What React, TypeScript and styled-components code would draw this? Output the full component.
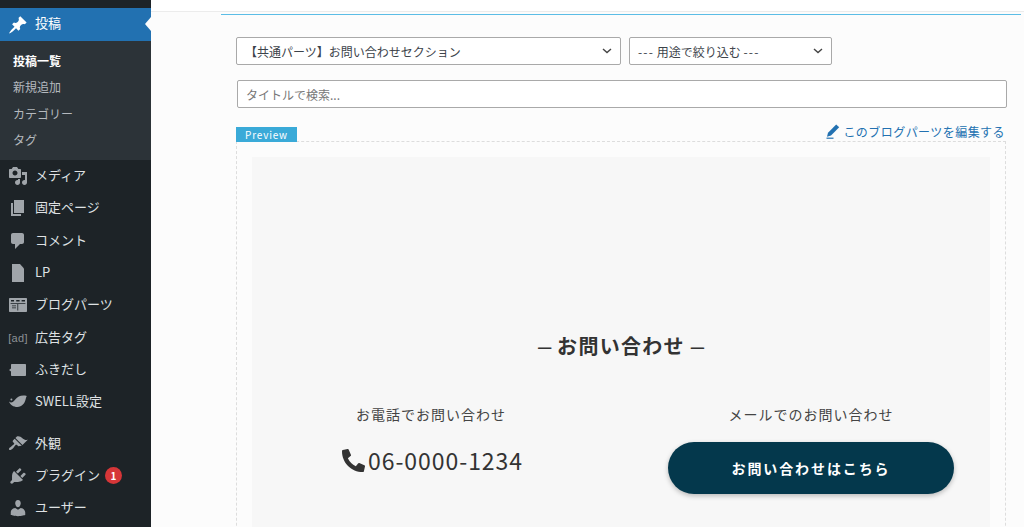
import React from 'react';
import styled, {createGlobalStyle} from "styled-components";
import {FaPhoneAlt} from "react-icons/fa";

const GlobalStyle = createGlobalStyle`
  html, body {
    margin: 0;
    padding: 0;
    height: 527px;
    overflow: hidden;
    background: #fcfcfc;
    font-family: "Noto Sans CJK JP", "Noto Sans", sans-serif;
  }
  * {
    box-sizing: border-box;
  }
`

const icons: Record<string, string> = {
    pin: "M10.44 3.02l1.82-1.82 6.36 6.35-1.83 1.82c-1.05-.68-2.48-.57-3.41.36l-.75.75c-.92.93-1.04 2.35-.35 3.41l-1.83 1.82-2.41-2.41-2.8 2.79c-.42.42-3.38 2.71-3.8 2.29s1.86-3.39 2.28-3.81l2.79-2.79L4.1 9.36l1.83-1.82c1.05.69 2.48.57 3.4-.36l.75-.75c.93-.92 1.05-2.35.36-3.41z",
    media: "M13 11V4c0-.55-.45-1-1-1h-1.67L9 1H5L3.67 3H2c-.55 0-1 .45-1 1v7c0 .55.45 1 1 1h10c.55 0 1-.45 1-1zM7 4.5c1.38 0 2.5 1.12 2.5 2.5S8.38 9.5 7 9.5 4.5 8.38 4.5 7 5.62 4.5 7 4.5zM14 6h5v10.5c0 1.38-1.12 2.5-2.5 2.5S14 17.88 14 16.5s1.12-2.5 2.5-2.5c.17 0 .34.02.5.05V9h-3V6zm-4 8.05V13h2v3.5c0 1.38-1.12 2.5-2.5 2.5S7 17.88 7 16.5 8.12 14 9.5 14c.17 0 .34.02.5.05z",
    pages: "M6 15V2h10v13H6zm-1 1h8v2H3V5h2v11z",
    comment: "M5 2h9c1.1 0 2 .9 2 2v7c0 1.1-.9 2-2 2h-2l-5 5v-5H5c-1.1 0-2-.9-2-2V4c0-1.1.9-2 2-2z",
    page: "M4 1h8l4 4.5V19H4z",
    parts: "M2 3h16c.6 0 1 .4 1 1v12c0 .6-.4 1-1 1H2c-.6 0-1-.4-1-1V4c0-.6.4-1 1-1zM3 5v1.6h3V5zM8.2 5v1.6h3.4V5zM13.6 5v1.6H17V5zM2.6 8.2v.8H17.4v-.8zM9.4 9v6.4h.8V9zM4 10.4v.9h4v-.9zM4 12.4v.9h4v-.9z",
    balloon: "M4 4h13c.6 0 1 .4 1 1v10c0 .6-.4 1-1 1H4c-.6 0-1-.4-1-1v-3.5L1 10l2-1.5V5c0-.6.4-1 1-1z",
    swell: "M1 9.5c1 1.2 2.6 1.4 3.8.6 2-1.4 3.2-4.2 6-5.6 2-1 5-1.4 8-.5-.6 1-.8 2-1.2 3.6-.8 3.6-3.6 7.4-8.2 7.4-4 0-7.2-2.2-8.4-5.5zM3.4 6.4a1 1 0 1 1 0 2 1 1 0 0 1 0-2z",
    brush: "M14.48 11.06L7.41 3.99l1.5-1.5c.5-.56 2.3-.47 3.51.32 1.21.8 1.43 1.28 2.91 2.1 1.18.64 2.45 1.26 4.45.85zm-.71.71L6.7 4.7 4.93 6.47c-.39.39-.39 1.02 0 1.41l1.06 1.06c.39.39.39 1.03 0 1.42-.6.6-1.43 1.11-2.21 1.69-.35.26-.7.53-1.01.84C1.43 13.23.4 14.96 1.2 15.76c.8.8 2.53-.23 3.86-1.56.31-.31.58-.66.84-1.01.58-.78 1.09-1.61 1.69-2.21.39-.39 1.03-.39 1.42 0l1.06 1.06c.39.39 1.02.39 1.41 0z",
    plug: "M13.11 4.36L9.87 7.6 8 5.73l3.24-3.24c.35-.34 1.05-.2 1.56.32.52.51.66 1.21.31 1.55zm-8 1.77l.91-1.12 9.01 9.01-1.19.84c-.71.71-2.63 1.16-3.82 1.16H6.14L4.9 17.26c-.59.59-1.54.59-2.12 0-.59-.58-.59-1.53 0-2.12l1.24-1.24v-3.88c0-1.13.4-3.19 1.09-3.89zm7.26 3.97l3.24-3.24c.34-.35 1.04-.21 1.55.31.52.51.66 1.21.31 1.55l-3.24 3.25z",
    user: "M10 9.25c-2.27 0-2.73-3.44-2.73-3.44C7 4.02 7.82 2 9.97 2c2.16 0 2.98 2.02 2.71 3.81 0 0-.41 3.44-2.68 3.44zm0 2.57L12.72 10c2.39 0 4.52 2.33 4.52 4.53v2.49s-3.65 1.13-7.24 1.13c-3.65 0-7.24-1.13-7.24-1.13v-2.49c0-2.25 1.94-4.48 4.47-4.48z",
};

const MenuIcon = ({name}: { name: string }) => (
    <IconBox>
        <svg width="20" height="20" viewBox="0 0 20 20" fill="currentColor" fillRule="evenodd">
            <path d={icons[name]}/>
        </svg>
    </IconBox>
);

const Chevron = () => (
    <svg width="10" height="6" viewBox="0 0 10 6" fill="none" stroke="#444" strokeWidth="1.4">
        <path d="M1 1l4 3.6L9 1"/>
    </svg>
);

const subItems = ["新規追加", "カテゴリー", "タグ"];

const menuTop = [
    {icon: "media", label: "メディア"},
    {icon: "pages", label: "固定ページ"},
    {icon: "comment", label: "コメント"},
    {icon: "page", label: "LP"},
    {icon: "parts", label: "ブログパーツ"},
    {icon: "ad", label: "広告タグ"},
    {icon: "balloon", label: "ふきだし"},
    {icon: "swell", label: "SWELL設定"},
];

const menuBottom = [
    {icon: "brush", label: "外観"},
    {icon: "plug", label: "プラグイン", badge: 1},
    {icon: "user", label: "ユーザー"},
];

type MenuEntry = { icon: string, label: string, badge?: number };

const MenuRow = ({item}: { item: MenuEntry }) => (
    <Row>
        {item.icon === "ad" ? <IconBox><AdMark>[ad]</AdMark></IconBox> : <MenuIcon name={item.icon}/>}
        <RowLabel>{item.label}</RowLabel>
        {item.badge && <Badge>{item.badge}</Badge>}
    </Row>
);

export default function App() {
    return (
        <Page>
            <GlobalStyle/>
            <Sidebar>
                <ActiveRow>
                    <MenuIcon name="pin"/>
                    <RowLabel>投稿</RowLabel>
                    <ActiveArrow/>
                </ActiveRow>
                <SubMenu>
                    <SubItem $current>投稿一覧</SubItem>
                    {subItems.map(s => <SubItem key={s}>{s}</SubItem>)}
                </SubMenu>
                {menuTop.map(m => <MenuRow key={m.label} item={m}/>)}
                <MenuGap/>
                {menuBottom.map(m => <MenuRow key={m.label} item={m}/>)}
            </Sidebar>

            <Main>
                <TopStrip/>
                <Content>
                    <BlueRule/>
                    <Filters>
                        <SelectBox $width="385px">
                            <span>【共通パーツ】お問い合わせセクション</span>
                            <Chevron/>
                        </SelectBox>
                        <SelectBox $width="203px">
                            <span><Dashes>---</Dashes> 用途で絞り込む <Dashes>---</Dashes></span>
                            <Chevron/>
                        </SelectBox>
                    </Filters>
                    <SearchInput placeholder="タイトルで検索..."/>
                    <PreviewHead>
                        <PreviewTag>Preview</PreviewTag>
                        <EditLink>
                            <svg width="14" height="15" viewBox="0 0 14 15" fill="currentColor">
                                <path d="M10.2 0.4l3 2.8L5 11.6 1 12.8l1-4z"/>
                                <path d="M0.5 13.6h7v1.2h-7z"/>
                            </svg>
                            このブログパーツを編集する
                        </EditLink>
                    </PreviewHead>
                    <PreviewFrame>
                        <Section>
                            <SectionTitle><TitleDash>–</TitleDash> お問い合わせ <TitleDash>–</TitleDash></SectionTitle>
                            <Columns>
                                <Column>
                                    <ColumnLabel>お電話でお問い合わせ</ColumnLabel>
                                    <Phone>
                                        <FaPhoneAlt size={23}/>
                                        <span>06-0000-1234</span>
                                    </Phone>
                                </Column>
                                <Column>
                                    <ColumnLabel>メールでのお問い合わせ</ColumnLabel>
                                    <ContactButton>お問い合わせはこちら</ContactButton>
                                </Column>
                            </Columns>
                        </Section>
                    </PreviewFrame>
                </Content>
            </Main>
        </Page>
    );
}

const Page = styled.div`
  display: flex;
  width: 1024px;
  height: 527px;
  overflow: hidden;
`
const Sidebar = styled.nav`
  flex: 0 0 151px;
  padding-top: 8px;
  background: #1d2327;
  color: #dfe1e3;
  font-size: 13px;
`
const IconBox = styled.span`
  flex: 0 0 35px;
  display: flex;
  justify-content: center;
  padding-left: 1px;
  color: #a0a5aa;
`
const AdMark = styled.span`
  font-family: "Liberation Sans", sans-serif;
  font-size: 11px;
  letter-spacing: 0.3px;
  color: #8c9196;
`
const Row = styled.div`
  display: flex;
  align-items: center;
  height: 32.3px;
`
const RowLabel = styled.span`
  margin-bottom: 3px;
`
const ActiveRow = styled(Row)`
  position: relative;
  height: 33px;
  background: #2271b1;
  color: #fff;

  ${RowLabel} {
    margin-bottom: 4px;
  }

  ${IconBox} {
    color: #fff;
  }
`
const ActiveArrow = styled.i`
  position: absolute;
  right: 0;
  top: 9px;
  border: 7px solid transparent;
  border-right: 6px solid #fcfcfc;
  border-left-width: 0;
`
const SubMenu = styled.div`
  display: flex;
  flex-direction: column;
  justify-content: center;
  height: 119px;
  padding: 0 0 0 13px;
  background: #2c3338;
`
const SubItem = styled.div<{ $current?: boolean }>`
  height: 26.5px;
  line-height: 26.5px;
  font-size: 12px;
  font-weight: ${props => props.$current ? 700 : 400};
  color: ${props => props.$current ? "#fff" : "#b4b9be"};
`
const MenuGap = styled.div`
  height: 9px;
`
const Badge = styled.span`
  width: 17px;
  height: 17px;
  margin-left: 5px;
  border-radius: 50%;
  background: #d63638;
  color: #fff;
  font-size: 10px;
  font-weight: 700;
  line-height: 17px;
  text-align: center;
`
const Main = styled.main`
  flex: 1;
  min-width: 0;
  background: #fcfcfc;
`
const TopStrip = styled.div`
  height: 12px;
  background: #fff;
  border-bottom: 1px solid #ececec;
`
const Content = styled.div`
  margin: 2px 3px 0 70px;
  color: #333;
`
const BlueRule = styled.div`
  height: 1px;
  background: #5bbde6;
`
const Filters = styled.div`
  display: flex;
  gap: 8px;
  margin: 22px 0 0 15px;
`
const SelectBox = styled.div<{ $width: string }>`
  display: flex;
  align-items: center;
  justify-content: space-between;
  width: ${props => props.$width};
  height: 28px;
  padding: 0 8px;
  background: #fff;
  border: 1px solid #a9a9a9;
  border-radius: 2px;
  font-size: 12px;
  color: #3c434a;
`
const Dashes = styled.span`
  letter-spacing: 1.2px;
`
const SearchInput = styled.input`
  display: block;
  width: 770px;
  height: 28px;
  margin: 15px 0 0 16px;
  padding: 0 8px;
  background: #fff;
  border: 1px solid #a9a9a9;
  border-radius: 2px;
  font-family: inherit;
  font-size: 12px;

  &::placeholder {
    color: #777;
    opacity: 1;
  }
`
const PreviewHead = styled.div`
  display: flex;
  align-items: flex-end;
  justify-content: space-between;
  width: 770px;
  height: 26px;
  margin: 7px 0 0 15px;
`
const PreviewTag = styled.span`
  width: 61px;
  height: 15px;
  margin-bottom: -1px;
  background: #3aaad8;
  color: #fff;
  font-size: 10px;
  line-height: 15px;
  letter-spacing: 0.8px;
  text-align: center;
`
const EditLink = styled.a`
  display: flex;
  align-items: center;
  gap: 3px;
  margin: 0 1px 1px 0;
  color: #2271b1;
  font-size: 12px;
  letter-spacing: 0.45px;
`
const PreviewFrame = styled.div`
  width: 770px;
  height: 440px;
  margin-left: 15px;
  padding: 15px;
  border: 1px dashed #ddd;
`
const Section = styled.section`
  height: 100%;
  padding-top: 175px;
  background: #f7f7f7;
`
const SectionTitle = styled.h2`
  margin: 0;
  font-size: 20px;
  font-weight: 700;
  line-height: 28px;
  letter-spacing: 1.3px;
  text-align: center;
  color: #333;
`
const TitleDash = styled.span`
  font-family: "Liberation Sans", sans-serif;
  font-size: 24px;
  font-weight: 400;
  letter-spacing: 0;
`
const Columns = styled.div`
  display: grid;
  grid-template-columns: 286px 286px;
  column-gap: 94px;
  justify-content: center;
  margin-top: 44px;
`
const Column = styled.div`
  display: flex;
  flex-direction: column;
  align-items: center;
`
const ColumnLabel = styled.p`
  margin: 0;
  font-size: 14px;
  line-height: 20px;
  letter-spacing: 1px;
  color: #444;
`
const Phone = styled.div`
  display: flex;
  align-items: center;
  gap: 3px;
  margin-top: 20px;
  padding-left: 3px;
  font-size: 23px;
  line-height: 32px;
  letter-spacing: 0.95px;
  color: #333;
`
const ContactButton = styled.button`
  width: 286px;
  height: 52px;
  margin-top: 18px;
  border: 0;
  border-radius: 26px;
  background: #04384c;
  box-shadow: 0 2px 5px rgba(0, 0, 0, 0.25);
  color: #fff;
  font-family: inherit;
  font-size: 14px;
  font-weight: 700;
  letter-spacing: 1.9px;
`
